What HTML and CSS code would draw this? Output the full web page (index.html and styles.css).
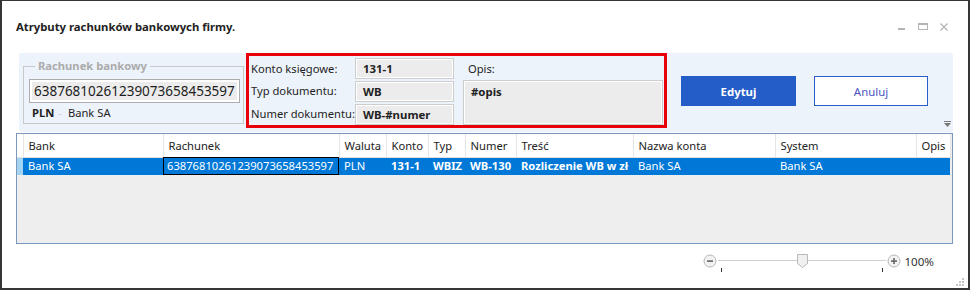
FILE: index.html
```html
<!DOCTYPE html>
<html lang="pl">
<head>
  <meta charset="UTF-8" />
  <title>Atrybuty rachunków bankowych firmy</title>
  <link rel="stylesheet" href="styles.css">
</head>
<body>
<div class="window">
  <div class="titlebar">
    <h1>Atrybuty rachunków bankowych firmy.</h1>
    <div class="controls">
      <svg width="8" height="8" viewBox="0 0 8 8"><rect x="0" y="5" width="7" height="2" fill="#b4b4b4"/></svg>
      <svg width="10" height="8" viewBox="0 0 10 8"><rect x="0.5" y="0.5" width="9" height="6" fill="none" stroke="#b4b4b4"/><rect x="0" y="0" width="10" height="2" fill="#b4b4b4"/></svg>
      <svg width="8" height="8" viewBox="0 0 8 8"><path d="M0.5 0.5 L7.5 7.5 M7.5 0.5 L0.5 7.5" stroke="#b4b4b4" stroke-width="1.2"/></svg>
    </div>
  </div>

  <div class="panel">
    <fieldset class="account-group">
      <legend>Rachunek bankowy</legend>
      <div class="account-box"><span>63876810261239073658453597</span></div>
      <div class="account-meta"><b>PLN</b><span class="dash">-</span><span>Bank SA</span></div>
    </fieldset>

    <div class="attrs">
      <div class="attr-labels">
        <span>Konto księgowe:</span>
        <span>Typ dokumentu:</span>
        <span>Numer dokumentu:</span>
      </div>
      <div class="attr-fields">
        <div class="field">131-1</div>
        <div class="field">WB</div>
        <div class="field">WB-#numer</div>
      </div>
      <div class="attr-opis">
        <span>Opis:</span>
        <div class="field opis">#opis</div>
      </div>
    </div>

    <div class="actions">
      <button class="btn primary">Edytuj</button>
      <button class="btn secondary">Anuluj</button>
    </div>

    <svg class="collapse" width="7" height="6" viewBox="0 0 7 6"><rect x="0" y="0" width="7" height="1" fill="#777"/><path d="M0 2 L7 2 L3.5 6 Z" fill="#777"/></svg>
  </div>

  <div class="grid">
    <table>
      <colgroup>
        <col style="width:6px"><col style="width:140px"><col style="width:176px"><col style="width:47px">
        <col style="width:42px"><col style="width:37px"><col style="width:51px"><col style="width:117px">
        <col style="width:142px"><col style="width:141px"><col style="width:34px">
      </colgroup>
      <thead>
        <tr>
          <th class="rowhead"></th>
          <th>Bank</th>
          <th>Rachunek</th>
          <th>Waluta</th>
          <th>Konto</th>
          <th>Typ</th>
          <th>Numer</th>
          <th>Treść</th>
          <th>Nazwa konta</th>
          <th>System</th>
          <th>Opis</th>
        </tr>
      </thead>
      <tbody>
        <tr class="selected">
          <td class="rowhead"></td>
          <td>Bank SA</td>
          <td class="focus">63876810261239073658453597</td>
          <td>PLN</td>
          <td class="bold">131-1</td>
          <td class="bold">WBIZ</td>
          <td class="bold">WB-130</td>
          <td class="bold">Rozliczenie WB w zł</td>
          <td>Bank SA</td>
          <td>Bank SA</td>
          <td></td>
        </tr>
      </tbody>
    </table>
  </div>

  <div class="zoombar">
    <svg width="14" height="14" viewBox="0 0 14 14"><circle cx="7" cy="7" r="6" fill="#f2f2f2" stroke="#b8b8b8"/><rect x="4" y="6.3" width="6" height="1.6" fill="#666"/></svg>
    <div class="slider">
      <svg width="168" height="20" viewBox="0 0 168 20">
        <rect x="0" y="6" width="168" height="1" fill="#d0d0d0"/>
        <rect x="3" y="14" width="1" height="4" fill="#333"/>
        <rect x="164" y="14" width="1" height="4" fill="#333"/>
        <path d="M79.5 0.5 H89.5 V9.5 L84.5 13.5 L79.5 9.5 Z" fill="#f0f0f0" stroke="#b8b8b8"/>
      </svg>
    </div>
    <svg width="14" height="14" viewBox="0 0 14 14"><circle cx="7" cy="7" r="6" fill="#f2f2f2" stroke="#b8b8b8"/><rect x="4" y="6.3" width="6" height="1.6" fill="#666"/><rect x="6.2" y="4" width="1.6" height="6" fill="#666"/></svg>
    <span class="zoomval">100%</span>
  </div>

  <svg class="grip" width="10" height="10" viewBox="0 0 10 10" fill="#c4c4c4">
    <rect x="7" y="1" width="2" height="2"/>
    <rect x="4" y="4" width="2" height="2"/><rect x="7" y="4" width="2" height="2"/>
    <rect x="1" y="7" width="2" height="2"/><rect x="4" y="7" width="2" height="2"/><rect x="7" y="7" width="2" height="2"/>
  </svg>
</div>
</body>
</html>
```

FILE: styles.css
```css
* {
  box-sizing: border-box;
}
body {
  margin: 0;
  font-family: "Noto Sans", "Open Sans", sans-serif;
  font-size: 11.2px;
  color: #1e1e1e;
}
.window {
  position: relative;
  width: 970px;
  height: 290px;
  border: 2px solid #353535;
  border-top-width: 1px;
  background: #fff;
  padding: 0 0 0 14px;
}
.titlebar {
  display: flex;
  align-items: center;
  height: 52px;
  padding-bottom: 2px;
}
.titlebar h1 {
  margin: 0;
  font-size: 11.3px;
  font-weight: bold;
  color: #222;
}
.controls {
  margin-left: auto;
  margin-right: 20px;
  display: flex;
  gap: 12px;
  align-items: center;
  padding-top: 2px;
}

.panel {
  position: relative;
  display: flex;
  align-items: flex-start;
  margin-left: 3px;
  width: 934px;
  height: 79px;
  background: #edf3fb;
  border-radius: 3px;
}
.account-group {
  margin: 5px 0 0 4px;
  padding: 0 3px 0 5px;
  width: 221px;
  height: 66px;
  border: 1px solid #c9c9c9;
}
.account-group legend {
  padding: 0 3px;
  margin-left: 6px;
  font-weight: bold;
  color: #ababab;
  line-height: 16px;
}
.account-box {
  height: 24px;
  border: 1px solid #adadad;
  padding: 2px;
  background: #fff;
  margin-top: 5px;
}
.account-box span {
  display: block;
  height: 100%;
  background: #ececec;
  font-size: 13.5px;
  line-height: 18px;
  padding-left: 2px;
  color: #1e1e1e;
}
.account-meta {
  padding: 2px 0 0 3px;
  line-height: 16px;
}
.account-meta .dash {
  color: #cfcfcf;
  margin: 0 6px 0 4px;
}

.attrs {
  display: flex;
  margin-left: 2px;
  width: 421px;
  height: 75px;
  border: 3px solid #e8000b;
  padding: 2px 0 0 2px;
}
.attr-labels {
  display: flex;
  flex-direction: column;
  width: 104px;
  white-space: nowrap;
}
.attr-labels span {
  height: 23px;
  line-height: 22px;
}
.attr-fields {
  display: flex;
  flex-direction: column;
  gap: 2px;
  width: 99px;
}
.field {
  height: 21px;
  border: 1px solid #cdcdcd;
  background: #ececec;
  box-shadow: inset 0 0 0 1px #fff;
  padding-left: 7px;
  font-size: 11.4px;
  font-weight: bold;
  line-height: 19px;
  color: #222;
}
.attr-opis {
  margin-left: 9px;
  width: 200px;
}
.attr-opis span {
  display: block;
  height: 22px;
  line-height: 22px;
  padding-left: 5px;
}
.field.opis {
  height: 45px;
  padding-top: 1px;
}

.actions {
  display: flex;
  gap: 18px;
  margin: 23px 0 0 14px;
}
.btn {
  height: 30px;
  font-family: inherit;
  font-size: 11.4px;
  cursor: pointer;
}
.btn.primary {
  width: 115px;
  border: none;
  background: #255dc8;
  color: #fff;
  font-weight: bold;
}
.btn.secondary {
  width: 114px;
  border: 1px solid #2a5cc8;
  background: #fff;
  color: #4b55c6;
}
.collapse {
  position: absolute;
  right: 2px;
  bottom: 5px;
}

.grid {
  margin-top: 1px;
  width: 937px;
  height: 111px;
  border: 1px solid #7b98bd;
  background: #eeeeee;
}
table {
  border-collapse: collapse;
  table-layout: fixed;
  width: 933px;
}
th, td {
  padding: 0 0 0 5px;
  text-align: left;
  white-space: nowrap;
  overflow: hidden;
  font-weight: normal;
}
th {
  height: 23px;
  background: #fff;
  border-right: 1px solid #e6e6e6;
  border-bottom: 1px solid #e0e0e0;
  color: #222;
}
td {
  height: 18px;
  line-height: 16px;
}
th.rowhead {
  border-right: 1px solid #e6e6e6;
}
tr.selected td {
  background: #0078d7;
  color: #fff;
}
tr.selected td.rowhead {
  background: #a3d4f4;
}
td.focus {
  outline: 1px solid #000;
  outline-offset: -1px;
  padding-left: 4px;
}
td.bold {
  font-weight: bold;
}

.zoombar {
  display: flex;
  align-items: center;
  justify-content: flex-end;
  height: 32px;
  width: 937px;
  padding-right: 19px;
  padding-top: 2px;
}
.slider {
  margin: 6px 1px 0 1px;
  height: 20px;
}
.slider svg {
  display: block;
}
.zoomval {
  margin-left: 3px;
  font-size: 11.6px;
  color: #333;
}
.grip {
  position: absolute;
  right: 3px;
  bottom: 1px;
}
```
